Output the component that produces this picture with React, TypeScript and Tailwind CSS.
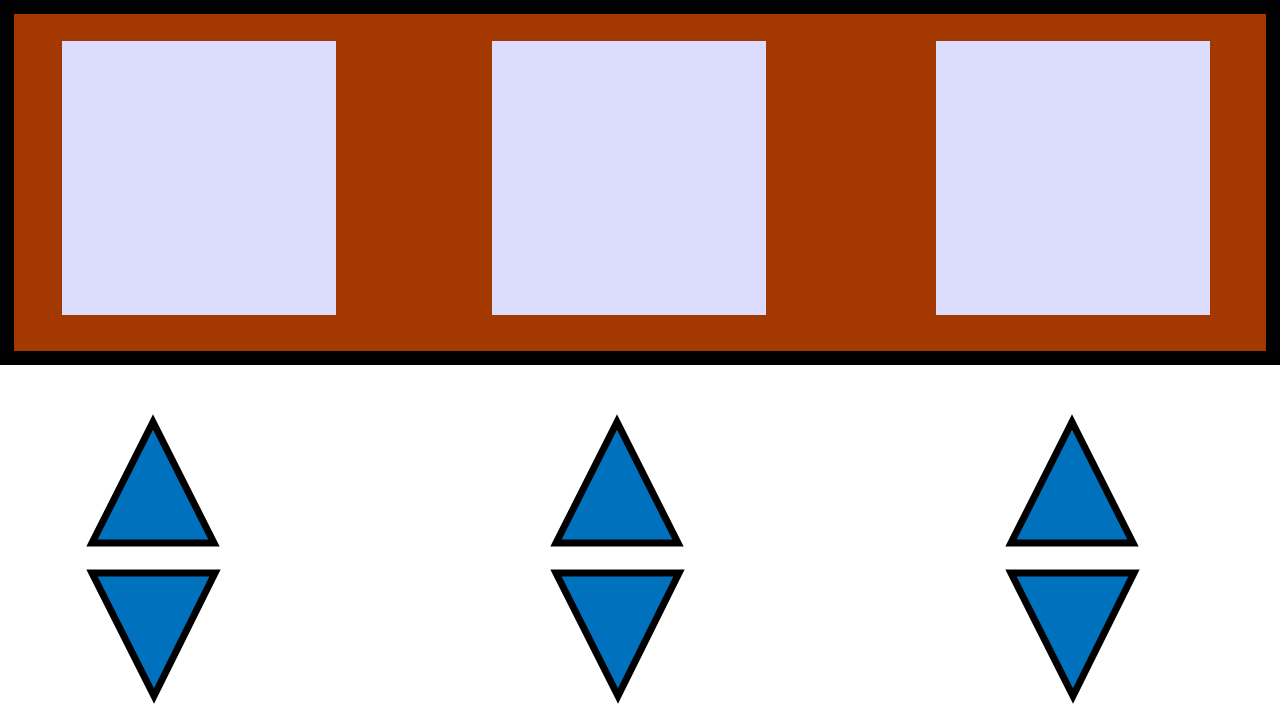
import React from "react";

function Arrows() {
  return (
    <svg width="140" height="300" viewBox="0 0 140 300" className="block shrink-0">
      <polygon points="69,12 8,133 130,133" fill="#0071bc" stroke="#000" strokeWidth="7" strokeLinejoin="miter" />
      <polygon points="8,163 131,163 70,286" fill="#0071bc" stroke="#000" strokeWidth="7" strokeLinejoin="miter" />
    </svg>
  );
}

export default function App() {
  return (
    <div className="w-[1280px] h-[720px] bg-white overflow-hidden">
      <div className="h-[365px] bg-black p-[14px]">
        <div className="h-full bg-[#a33900] flex items-start pt-[27px]">
          <div className="ml-[48px] w-[274px] h-[274px] bg-[#dcdcff]" />
          <div className="ml-[156px] w-[274px] h-[274px] bg-[#dcdcff]" />
          <div className="ml-[170px] w-[274px] h-[274px] bg-[#dcdcff]" />
        </div>
      </div>
      <div className="flex mt-[45px]">
        <div className="ml-[84px]"><Arrows /></div>
        <div className="ml-[324px]"><Arrows /></div>
        <div className="ml-[315px]"><Arrows /></div>
      </div>
    </div>
  );
}
